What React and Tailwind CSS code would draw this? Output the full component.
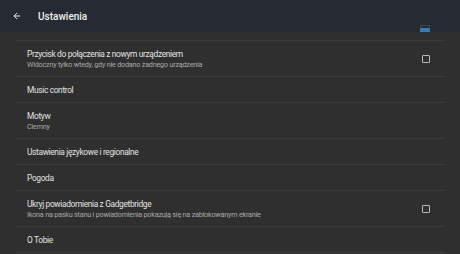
import React from 'react';

const ROWS = [
  { title: 'Przycisk do połączenia z nowym urządzeniem', sub: 'Widoczny tylko wtedy, gdy nie dodano żadnego urządzenia', check: true },
  { title: 'Music control' },
  { title: 'Motyw', sub: 'Ciemny' },
  { title: 'Ustawienia językowe i regionalne' },
  { title: 'Pogoda' },
  { title: 'Ukryj powiadomienia z Gadgetbridge', sub: 'Ikona na pasku stanu i powiadomienia pokazują się na zablokowanym ekranie', check: true },
  { title: 'O Tobie' },
];

function Checkbox() {
  return <div className="w-[8px] h-[8px] border-[1.5px] border-[#b9b9b9] rounded-[1px]" />;
}

function Row({ title, sub, check }) {
  return (
    <div
      className={`flex items-center justify-between border-b border-[#3b3b3b] pl-[11px] pr-[15px] ${
        sub ? 'h-[36px]' : 'h-[26px]'
      }`}
    >
      <div className="flex flex-col pt-[1px]">
        <span className="text-[8.4px] leading-[11px] tracking-[-0.35px] text-[#e2e2e2]">{title}</span>
        {sub && (
          <span className="text-[7.2px] leading-[10px] tracking-[-0.2px] text-[#a9a9a9]">{sub}</span>
        )}
      </div>
      {check && <Checkbox />}
    </div>
  );
}

export default function App() {
  return (
    <div className="w-[460px] h-[254px] overflow-hidden bg-[#2f2f2f] font-['Roboto',sans-serif]">
      {/* Toolbar */}
      <div className="relative h-[32px] bg-[#262a32] flex items-center">
        <svg className="ml-[12px]" width="10" height="10" viewBox="0 0 24 24" fill="none" stroke="#e8e8e8" strokeWidth="2.4" strokeLinecap="round" strokeLinejoin="round">
          <path d="M19 12H5" />
          <path d="M12 19l-7-7 7-7" />
        </svg>
        <span className="ml-[16px] text-[10px] font-medium text-[#f0f0f0]">Ustawienia</span>
        {/* checked box of the row scrolled under the toolbar */}
        <div className="absolute right-[30px] bottom-[4px] w-[10px] h-[3px] border-x border-t border-[#31475e] rounded-t-[1px]" />
        <div className="absolute right-[30px] bottom-0 w-[10px] h-[4px] rounded-t-[1px] bg-[#3d8fd6] opacity-80" />
      </div>

      <div className="ml-4 w-[429px] flex flex-col">
        <div className="h-[9px] border-b border-[#3b3b3b]" />
        {ROWS.map((r) => (
          <Row key={r.title} {...r} />
        ))}
      </div>
    </div>
  );
}
